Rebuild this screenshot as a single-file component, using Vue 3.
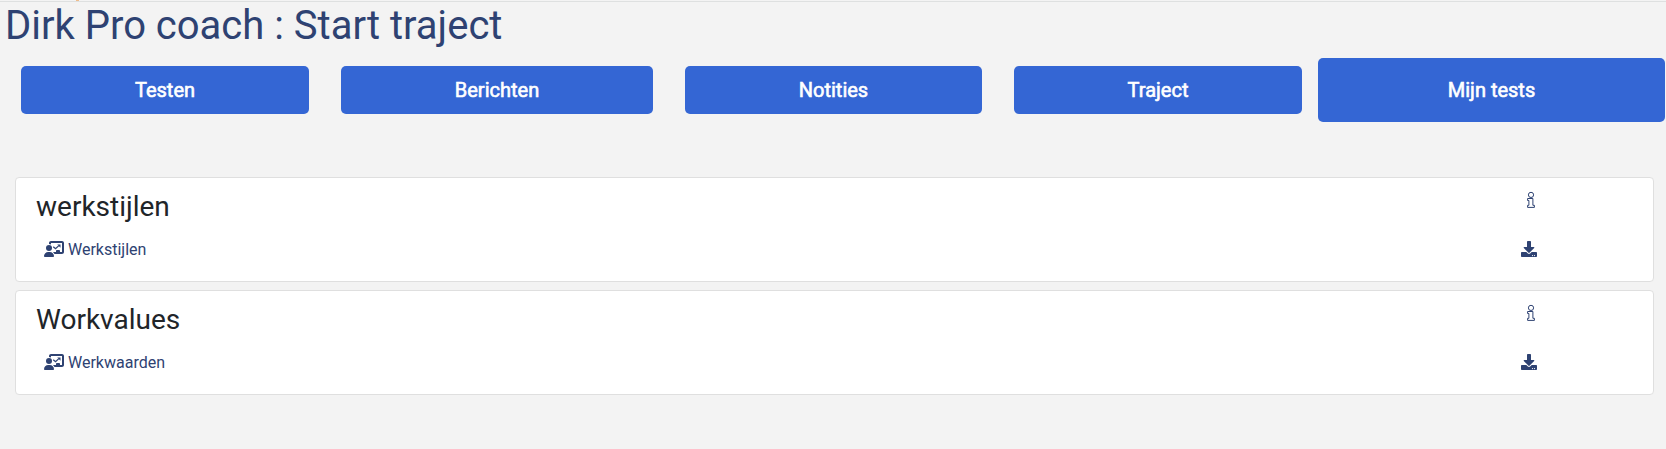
<template>
  <div class="page">
    <div class="top-line"><span class="marker"></span></div>
    <h1 class="title">{{ title }}</h1>

    <nav class="tabs">
      <button
        v-for="tab in tabs"
        :key="tab.name"
        type="button"
        class="tab"
        :class="['tab-' + tab.name, { active: tab.name === activeTab }]"
        @click="activeTab = tab.name"
      >
        {{ tab.label }}
      </button>
    </nav>

    <main class="cards">
      <section v-for="card in cards" :key="card.title" class="card">
        <div class="row row-head">
          <h3 class="card-title">{{ card.title }}</h3>
          <a class="info" href="#" @click.prevent>
            <svg viewBox="0 0 10 18" width="10" height="18">
              <circle cx="5" cy="3.9" r="2.6" />
              <path d="M1.6 7.5h5.3v6.8h1.5v2.1H1.6v-2.1h1.3V9.5H1.600z" />
            </svg>
          </a>
        </div>
        <div class="row row-link">
          <a class="test-link" href="#" @click.prevent>
            <svg viewBox="0 0 640 512" width="20" height="16">
              <path d="M160 64c0-35.300 28.700-64 64-64h352c35.300 0 64 28.700 64 64v288c0 35.300-28.700 64-64 64H336.800c-11.800-25.500-29.900-47.500-52.400-64H384v-32c0-17.700 14.300-32 32-32h64c17.700 0 32 14.300 32 32v32h64V64H224v49.100C205.200 102.200 183.300 96 160 96z" />
              <circle cx="160" cy="224" r="96" />
              <path d="M133.300 352h53.400C260.300 352 320 411.700 320 485.300c0 14.700-11.900 26.700-26.700 26.700H26.700C11.900 512 0 500.100 0 485.300 0 411.700 59.700 352 133.300 352z" />
              <path d="M296 182l74 64 104-98" fill="none" stroke="currentColor" stroke-width="42" />
              <path d="M424 112h104v104z" />
            </svg>
            <span class="test-name">{{ card.test }}</span>
          </a>
          <a class="download" href="#" @click.prevent>
            <svg viewBox="0 0 512 512" width="16" height="16">
              <path d="M216 0h80c13.300 0 24 10.700 24 24v168h87.700c17.800 0 26.700 21.500 14.100 34.100L269.700 378.300c-7.500 7.500-19.800 7.500-27.300 0L90.100 226.100c-12.600-12.600-3.700-34.100 14.100-34.100H192V24c0-13.300 10.700-24 24-24zm296 376v112c0 13.300-10.700 24-24 24H24c-13.300 0-24-10.700-24-24V376c0-13.300 10.700-24 24-24h146.700l49 49c20.100 20.100 52.500 20.100 72.600 0l49-49H488c13.300 0 24 10.700 24 24zm-124 88c0-11-9-20-20-20s-20 9-20 20 9 20 20 20 20-9 20-20zm64 0c0-11-9-20-20-20s-20 9-20 20 9 20 20 20 20-9 20-20z" />
            </svg>
          </a>
        </div>
      </section>
    </main>
  </div>
</template>

<script setup>
import { ref } from 'vue';

const title = 'Dirk Pro coach : Start traject';
const activeTab = ref('mijn-tests');

const tabs = [
  { name: 'testen', label: 'Testen' },
  { name: 'berichten', label: 'Berichten' },
  { name: 'notities', label: 'Notities' },
  { name: 'traject', label: 'Traject' },
  { name: 'mijn-tests', label: 'Mijn tests' }
];

const cards = [
  { title: 'werkstijlen', test: 'Werkstijlen' },
  { title: 'Workvalues', test: 'Werkwaarden' }
];
</script>

<style>
body {
  margin: 0;
  background-color: #f3f3f3;
}
</style>

<style scoped>
.page {
  box-sizing: border-box;
  min-height: 449px;
  background-color: #f3f3f3;
  color: #212529;
  font-family: Roboto, sans-serif;
  font-size: 16px;
  line-height: 1.5;
}

.top-line {
  box-sizing: border-box;
  height: 2px;
  border-bottom: 1px solid #dee0e0;
}

.marker {
  display: block;
  width: 3px;
  height: 1px;
  margin-left: 76px;
  background-color: #efbd8c;
}

.title {
  margin: 0;
  padding-left: 5px;
  color: #2e4272;
  font-size: 40px;
  font-weight: 400;
  line-height: 48px;
}

.tabs {
  display: flex;
  align-items: center;
  height: 64px;
  margin-top: 8px;
  padding-left: 21px;
}

.tab {
  height: 48px;
  margin: 0 32px 0 0;
  padding: 0;
  border: 0;
  border-radius: 5px;
  background-color: #3466d4;
  color: #fff;
  font-family: inherit;
  font-size: 20px;
  font-weight: 400;
  -webkit-text-stroke: 0.6px #fff;
  cursor: pointer;
}

.tab-testen,
.tab-traject {
  width: 288px;
}

.tab-berichten {
  width: 312px;
}

.tab-notities {
  width: 297px;
}

.tab-traject {
  margin-right: 16px;
}

.tab-mijn-tests {
  width: 347px;
  height: 64px;
  margin-right: 0;
}

.cards {
  display: flex;
  flex-direction: column;
  gap: 8px;
  padding: 55px 12px 0 15px;
}

.card {
  box-sizing: border-box;
  height: 105px;
  padding: 11px 20px 0;
  border: 1px solid #dfdfdf;
  border-radius: 4px;
  background-color: #fff;
}

.row {
  display: flex;
  justify-content: space-between;
}

.row-head {
  height: 48px;
}

.card-title {
  margin: 0;
  font-size: 28px;
  font-weight: 400;
  line-height: 36px;
}

.info {
  height: 18px;
  margin: 2px 97px 0 0;
}

.info svg {
  fill: none;
  stroke: #2e4272;
  stroke-width: 1;
}

.test-link {
  display: flex;
  align-items: center;
  gap: 4px;
  height: 24px;
  padding-left: 8px;
}

.test-name {
  padding-top: 2px;
}

.download {
  height: 16px;
  margin: 4px 96px 0 0;
}

.test-link,
.download {
  color: #2e4272;
  text-decoration: none;
}

svg {
  display: block;
  fill: currentColor;
}
</style>
